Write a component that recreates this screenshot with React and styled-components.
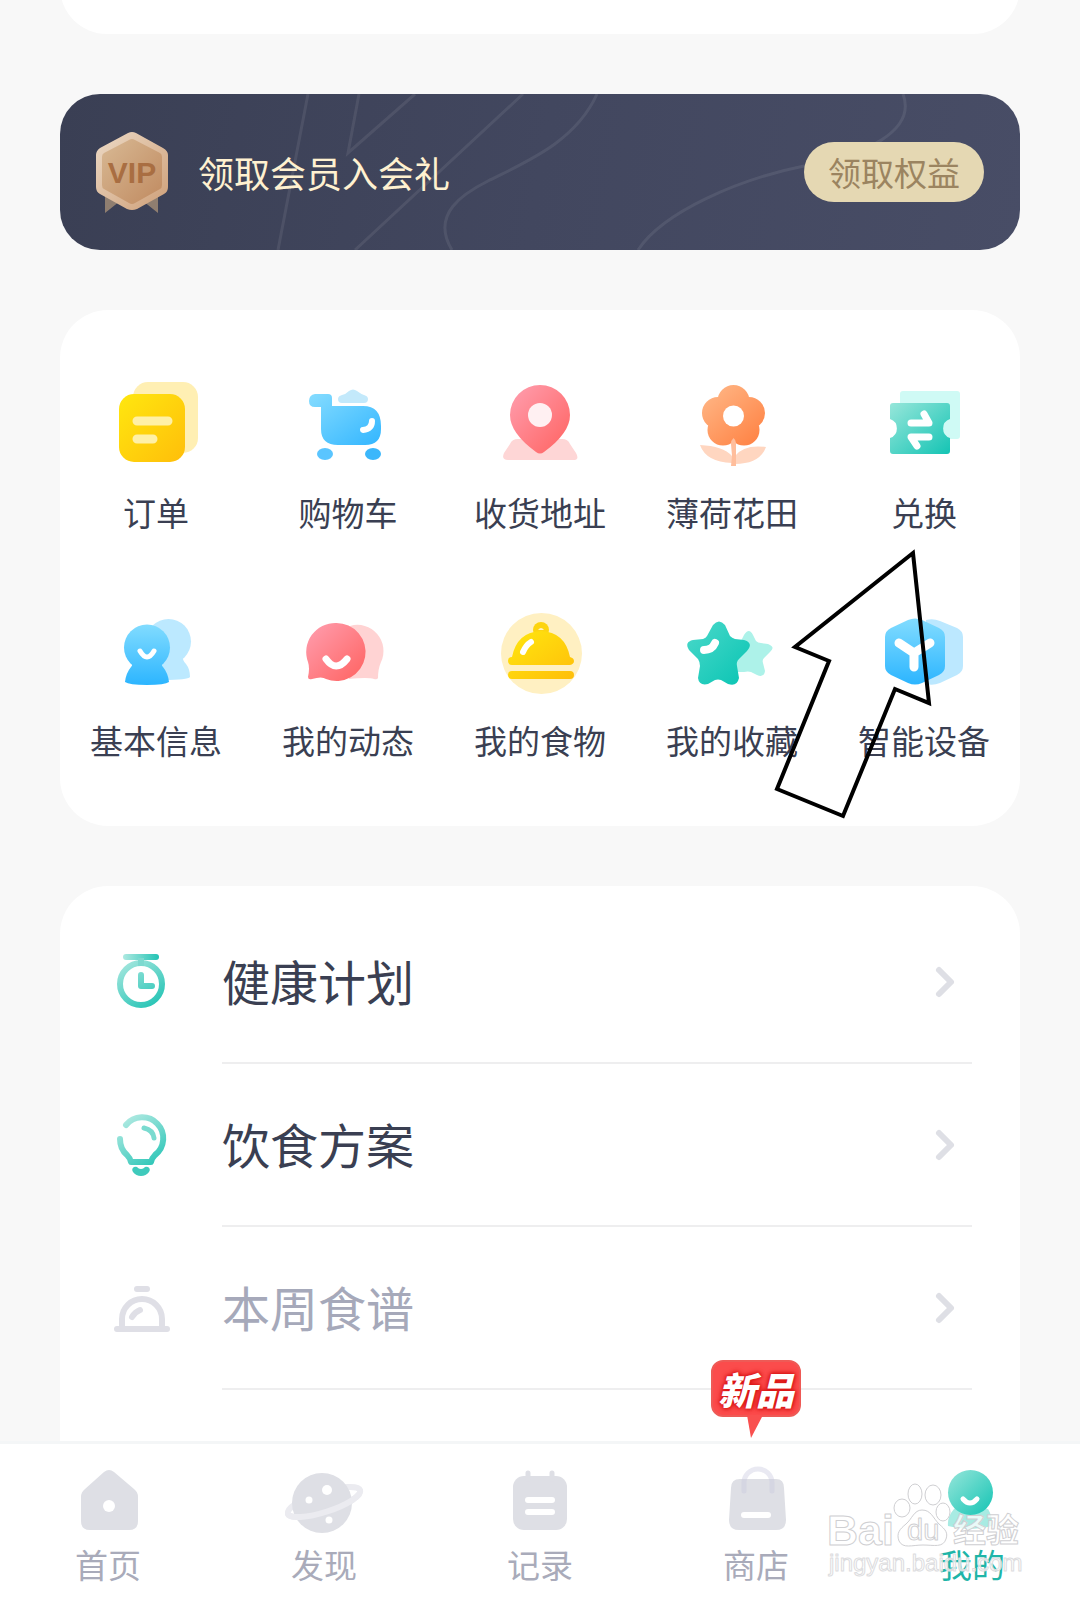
import React from "react";
import styled, { createGlobalStyle } from "styled-components";

const GlobalStyle = createGlobalStyle`
  *, *::before, *::after { box-sizing: border-box; }
  body {
    margin: 0;
    background: #f8f8f8;
    color: #3a3f52;
    font-family: "Noto Sans CJK SC", "Noto Sans", sans-serif;
  }
  a { color: inherit; text-decoration: none; }
  svg { display: block; flex: none; overflow: visible; }
`;

const Page = styled.div`
  min-height: 100vh;
  display: flex;
  flex-direction: column;
  overflow: hidden;
`;

const Main = styled.main`
  flex: 1;
  display: flex;
  flex-direction: column;
  gap: 60px;
  padding: 0 60px;
`;

const Card = styled.section`
  background: #fff;
  border-radius: 48px;
`;

const PreviousCard = styled(Card)`
  height: 94px;
  margin-top: -60px;
`;

const Banner = styled.section`
  position: relative;
  display: flex;
  align-items: center;
  gap: 30px;
  height: 156px;
  padding: 0 36px;
  border-radius: 40px;
  overflow: hidden;
  background: linear-gradient(100deg, #3a3f54, #42475f 50%, #484d66);
`;

const BannerLines = styled.svg`
  position: absolute;
  inset: 0;
  width: 100%;
  height: 100%;
`;

const BannerTitle = styled.h2`
  position: relative;
  flex: 1;
  margin: 0;
  font-size: 36px;
  font-weight: 400;
  line-height: 48px;
  color: #fff1d0;
`;

const ClaimButton = styled.button`
  position: relative;
  width: 180px;
  height: 60px;
  padding: 0;
  border: 0;
  border-radius: 30px;
  background: #e5d8b3;
  color: #9b8460;
  font: inherit;
  font-size: 33px;
  line-height: 48px;
`;

const GridCard = styled(Card)`
  position: relative;
  padding: 68px 0 62px;
`;

const ShortcutGrid = styled.nav`
  display: grid;
  grid-template-columns: repeat(5, 1fr);
  row-gap: 70px;
`;

const Shortcut = styled.a`
  display: flex;
  flex-direction: column;
  align-items: center;
  gap: 14px;
  font-size: 33px;
  line-height: 48px;
  white-space: nowrap;
`;

const Pointer = styled.svg`
  position: absolute;
  top: 235px;
  right: 80px;
  pointer-events: none;
`;

const ListCard = styled(Card)`
  flex: 1;
  padding: 15px 48px 48px 51px;
  border-radius: 48px 48px 0 0;
`;

const ListRow = styled.a`
  display: flex;
  align-items: center;
  gap: 51px;
  color: ${(p) => (p.$muted ? "#a6a9ba" : "#3a3f52")};
`;

const RowBody = styled.span`
  flex: 1;
  display: flex;
  align-items: center;
  justify-content: space-between;
  height: 163px;
  padding-right: 18px;
  border-bottom: 2px solid #eeeeef;
`;

const RowLabel = styled.span`
  padding-bottom: 4px;
  font-size: 48px;
  line-height: 72px;
`;

const TabBar = styled.nav`
  position: relative;
  display: grid;
  grid-template-columns: repeat(5, 1fr);
  padding: 21px 0 12px;
  border-top: 3px solid #f4f6f7;
  background: #fff;
`;

const Tab = styled.a`
  position: relative;
  display: flex;
  flex-direction: column;
  align-items: center;
  gap: 3px;
  font-size: 33px;
  line-height: 48px;
  color: ${(p) => (p.$active ? "#1fb5a8" : "#a9abba")};
`;

const NewBadge = styled.span`
  position: absolute;
  top: -105px;
  left: 50%;
  margin-left: -45px;
  width: 90px;
  height: 57px;
  border: 2px solid #ee5a56;
  border-radius: 12px;
  background: #fb4c4c;
  color: #fff;
  font-size: 38px;
  font-style: italic;
  font-weight: 900;
  line-height: 54px;
  text-align: center;
  white-space: nowrap;
  text-shadow: 0 0 3px #d91414, 0 0 4px #d91414, 0 0 6px #d91414;
`;

const BadgeTail = styled.svg`
  position: absolute;
  top: 53px;
  left: 32px;
`;

const Watermark = styled.svg`
  position: absolute;
  right: 54px;
  bottom: 4px;
  pointer-events: none;
`;

const Gradient = ({ id, from, to, vertical }) => (
  <linearGradient id={id} x1="0" y1="0" x2={vertical ? "0" : "1"} y2="1">
    <stop offset="0" stopColor={from} />
    <stop offset="1" stopColor={to} />
  </linearGradient>
);

const CanvasGradient = ({ id, from, to, box: [x1, y1, x2, y2] }) => (
  <linearGradient id={id} gradientUnits="userSpaceOnUse" x1={x1} y1={y1} x2={x2} y2={y2}>
    <stop offset="0" stopColor={from} />
    <stop offset="1" stopColor={to} />
  </linearGradient>
);

const SharedGradients = () => (
  <svg width="0" height="0" style={{ position: "absolute" }} aria-hidden="true">
    <defs>
      <Gradient id="yellow" from="#ffe70f" to="#ffbe0a" />
      <Gradient id="blue" from="#85dcff" to="#33b6ff" />
      <Gradient id="blueDown" from="#82dcff" to="#2cb5ff" vertical />
      <Gradient id="pink" from="#ff9fb0" to="#ff6260" />
      <Gradient id="teal" from="#97e6da" to="#14c4b4" />
      <Gradient id="star" from="#4cd9ca" to="#08c4b3" />
      <Gradient id="gold" from="#d8b994" to="#c08a60" />
      <Gradient id="rim" from="#ecdac6" to="#ce9f78" />
      <CanvasGradient id="petal" from="#ffb584" to="#ff8446" box={[24, 12, 70, 66]} />
      <CanvasGradient id="person" from="#82dcff" to="#2cb5ff" box={[39, 18, 39, 79]} />
      <CanvasGradient id="tealStroke" from="#aee9e1" to="#22c3b4" box={[12, 4, 46, 54]} />
      <CanvasGradient id="tealBar" from="#aee9e1" to="#22c3b4" box={[12, 4, 48, 4]} />
    </defs>
  </svg>
);

const VipBadge = () => (
  <svg width="72" height="82" viewBox="0 0 72 82" aria-label="VIP">
    <path d="M9 62v20l15-12zM62 62v20L47 70z" fill="#8f7e70" />
    <path d="M32 2q4-2 8 0l27 15q5 3 5 7v32q0 5-4 7L41 78q-5 2-10 0L4 63q-4-2-4-7V24q0-4 4-7z" fill="url(#rim)" />
    <path d="M33 9q3-2 6 0l25 13q2 1 2 4v28q0 3-2 4L39 72q-3 2-6 0L8 58q-2-1-2-4V26q0-3 2-4z" fill="url(#gold)" />
    <text x="36" y="52" textAnchor="middle" fontFamily="Liberation Sans, Arial, sans-serif" fontWeight="700" fontSize="30" fill="#a96e42">VIP</text>
  </svg>
);

const glyphs = {
  orders: (
    <>
      <rect x="25" y="4" width="65" height="71" rx="15" fill="#ffefb3" />
      <rect x="11" y="16" width="66" height="68" rx="15" fill="url(#yellow)" />
      <path d="M29 43h31M29 61h16" stroke="#fff0a6" strokeWidth="9" strokeLinecap="round" />
    </>
  ),
  cart: (
    <>
      <path d="M42 25q-4 0-4-4 0-3 4-4 4-1 7-4 4-3 8 0 4 3 7 4 4 1 4 4 0 4-4 4z" fill="#c3e9fb" />
      <path d="M15 16h13q4 0 4 4v8h31q18 0 18 20v3q0 16-16 16H38q-17 0-17-16V29h-6q-6 0-6-6t6-7z" fill="url(#blue)" />
      <ellipse cx="25" cy="76" rx="8" ry="6" fill="#5ac5ff" />
      <ellipse cx="73" cy="76" rx="8" ry="6" fill="#3bb7fb" />
      <path d="M72 43q0 8-9 9" fill="none" stroke="#fff" strokeWidth="6" strokeLinecap="round" />
    </>
  ),
  address: (
    <>
      <path d="M26 61h44q6 0 8 5l6 9q4 7-3 7H16q-7 0-4-7l6-9q2-5 8-5z" fill="#fed6d6" />
      <path d="M48 7a30 30 0 0 1 30 30q0 18-26 37-4 3-8 0Q18 55 18 37A30 30 0 0 1 48 7z" fill="url(#pink)" />
      <circle cx="48" cy="37" r="12" fill="#fff0f2" />
    </>
  ),
  flower: (
    <>
      <path d="M16 67q23 1 32 11v7q-26-1-32-18zM82 69q-22-3-31 9v8q25 0 31-17z" fill="#ffd6c0" />
      <g fill="url(#petal)">
        <circle cx="49.5" cy="23" r="16" />
        <circle cx="34" cy="35" r="16" />
        <circle cx="65" cy="35" r="16" />
        <circle cx="39" cy="52" r="15.5" />
        <circle cx="60" cy="52" r="15.5" />
        <circle cx="49.5" cy="42" r="14" />
      </g>
      <circle cx="49.5" cy="38" r="10.5" fill="#fff" />
      <path d="M49.5 60q2.500 2 2.500 5v23h-5l1-10-1-12q0-4 2.500-6z" fill="#ffbe9c" />
    </>
  ),
  exchange: (
    <>
      <rect x="24" y="13" width="60" height="48" rx="3" fill="#cffaf5" />
      <path d="M17 25h54q3 0 3 3v13a10 10 0 0 0 0 19v13q0 3-3 3H17q-3 0-3-3V60a10 10 0 0 0 0-19V28q0-3 3-3z" fill="url(#teal)" />
      <path d="M35 45h18l-5-9M53 59H35l6 9" fill="none" stroke="#fff" strokeWidth="7" strokeLinecap="round" strokeLinejoin="round" />
    </>
  ),
  profile: (
    <>
      <g fill="#bce9ff">
        <circle cx="60.5" cy="35.500" r="22.5" />
        <path d="M50 50h25q-1 4 3 8 4 5 4 13-2 3-27 3z" />
      </g>
      <g fill="url(#person)">
        <circle cx="39" cy="41.500" r="23" />
        <path d="M24 55h30q-1 4 1 6 5 6 6 15-4 3-22 3t-22-3q1-9 6-15 2-2 1-6z" />
      </g>
      <path d="M32 45q7 12 14 0" fill="none" stroke="#fff" strokeWidth="5" strokeLinecap="round" />
    </>
  ),
  posts: (
    <>
      <path d="M50 20a26 26 0 0 1 31 36q-3 7-3 16-1 2-4 1-6-2-25 0z" fill="#ffd3d3" />
      <path d="M36 17a29 29 0 1 1-10 56q-4-3-14 0-4 1-4-2 2-9 0-15A29 29 0 0 1 36 17z" fill="url(#pink)" />
      <path d="M26 53q10 14 21 0" fill="none" stroke="#fff" strokeWidth="7" strokeLinecap="round" />
    </>
  ),
  food: (
    <>
      <circle cx="49.5" cy="47.5" r="40.5" fill="#fff0c2" />
      <circle cx="49" cy="24" r="8" fill="#fdd410" />
      <path d="M20 51Q25 26 49 25q24 1 29 26 4 1 4 4t-4 4H20q-4 0-4-4t4-4zM20 65h58q4 0 4 4t-4 4H20q-4 0-4-4t4-4z" fill="url(#yellow)" />
      <path d="M46 24q3-4 6 0z" fill="#fff0c2" />
      <path d="M39 36q-5 3-8 10" fill="none" stroke="#fff" strokeWidth="6" strokeLinecap="round" />
    </>
  ),
  favorites: (
    <>
      <path d="M60 29q5-8 9 0l3 6q2 2 5 2l7 1q8 3 2 8l-6 6q-2 2-1 5l2 8q-1 7-8 4l-6-3q-3-1-7 0H50V36q7 0 8-3z" fill="#adf2e9" />
      <path d="M29 19q6-7 12 0l5 11q2 2 5 3l9 1q10 3 3 11l-8 8q-3 3-2 7l2 12q-2 9-11 6l-7-4q-3-1-6 0l-7 4q-9 2-10-6l2-12q0-4-2-7l-9-9q-5-8 4-10l10-1q3-1 4-3z" fill="url(#star)" />
      <path d="M20 44q8 0 11-7" fill="none" stroke="#fff" strokeWidth="8" strokeLinecap="round" />
    </>
  ),
  device: (
    <>
      <path d="M50 14q7-2 14 1l17 7q6 3 6 9v29q0 6-6 9l-17 8q-7 3-14 1z" fill="#bce8ff" />
      <path d="M32 14q7-3 14 0l17 8q6 3 6 9v29q0 6-6 9l-17 8q-7 3-14 0l-17-8q-6-3-6-9V31q0-6 6-9z" fill="url(#blueDown)" />
      <path d="M23 37l15 10 16-10M38 47v14" fill="none" stroke="#fff" strokeWidth="9" strokeLinecap="round" strokeLinejoin="round" />
    </>
  ),
};

const rowGlyphs = {
  plan: (
    <g fill="none" stroke="url(#tealStroke)" strokeWidth="6" strokeLinecap="round" strokeLinejoin="round">
      <rect x="12" y="1" width="36" height="6" rx="3" fill="url(#tealBar)" stroke="none" />
      <circle cx="30" cy="31" r="21" />
      <path d="M30 5v8" strokeLinecap="butt" stroke="#7dd9cf" />
      <path d="M30 22v11h11" />
    </g>
  ),
  diet: (
    <g fill="none" stroke="url(#tealStroke)" strokeWidth="6" strokeLinecap="round" strokeLinejoin="round">
      <path d="M15 9A21 21 0 1 1 44 39q-3 3-4 7H20q-1-4-4-7-7-6-7-16" />
      <path d="M33 12q9 2 10 10" stroke="#7adbd0" strokeWidth="5" />
      <path d="M23 51q3-1 4 1 3 2 6 0 1-2 4-1 3 2 1 5-3 4-8 4t-8-4q-2-3 1-5z" fill="#3fcabc" stroke="none" />
    </g>
  ),
  menu: (
    <g fill="none" stroke="#dfdfe6" strokeWidth="6" strokeLinecap="round" strokeLinejoin="round">
      <path d="M26 10h10M6 50h50M11 50V40a20 20 0 0 1 40 0v10M29 31q-5 2-8 7" />
    </g>
  ),
};

const tabGlyphs = {
  home: (
    <>
      <path d="M38 7q5-4 10 0l20 17q4 3 4 8v24q0 9-9 9H24q-9 0-9-9V32q0-5 4-8z" fill="#dedfe5" />
      <circle cx="43" cy="41" r="6" fill="#fff" />
    </>
  ),
  discover: (
    <>
      <ellipse cx="42" cy="37" rx="38" ry="10" transform="rotate(-18 42 37)" fill="none" stroke="#ebebf0" strokeWidth="6" />
      <circle cx="40" cy="38" r="30" fill="#dedfe5" />
      <circle cx="45" cy="25" r="5" fill="#fff" />
      <circle cx="27" cy="35" r="3.5" fill="#fff" />
      <circle cx="47" cy="55" r="3.5" fill="#fff" />
      <path d="M4 37a38 10 0 0 0 76 0" transform="rotate(-18 42 37)" fill="none" stroke="#ebebf0" strokeWidth="6" />
    </>
  ),
  record: (
    <>
      <rect x="15" y="11" width="54" height="54" rx="11" fill="#dedfe5" />
      <path d="M30 8v6M54 8v6" stroke="#dedfe5" strokeWidth="5" strokeLinecap="round" />
      <path d="M30 35h24M30 47h24" stroke="#fff" strokeWidth="6" strokeLinecap="round" />
    </>
  ),
  shop: (
    <>
      <path d="M26 14h36q8 0 8 9l2 32q0 10-10 10H25q-10 0-10-10l2-32q0-9 9-9z" fill="#dedfe5" />
      <path d="M30 26V18a14 14 0 0 1 28 0v8" fill="none" stroke="#c8c8df" strokeOpacity=".4" strokeWidth="5" strokeLinecap="round" />
      <path d="M30 50h24" stroke="#fff" strokeWidth="6" strokeLinecap="round" />
    </>
  ),
  mine: (
    <>
      <path d="M24 44h34q5 8 4 17-22 6-44 0-1-9 6-17z" fill="#a8ebe3" />
      <circle cx="40.500" cy="27.500" r="22.5" fill="url(#teal)" />
      <path d="M33 34q7 8 14 0" fill="none" stroke="#fff" strokeWidth="5" strokeLinecap="round" />
    </>
  ),
};

const Chevron = () => (
  <svg width="18" height="30" viewBox="0 0 18 30" aria-hidden="true">
    <path d="M3 3l12 12L3 27" fill="none" stroke="#dedfe5" strokeWidth="6" strokeLinecap="round" strokeLinejoin="round" />
  </svg>
);

const SiteWatermark = () => (
  <Watermark width="204" height="116" viewBox="0 0 204 116" aria-hidden="true">
    <g fill="#fff" fillOpacity=".75" stroke="#cfcfd2" strokeWidth="1" strokeLinejoin="round">
      <ellipse cx="80" cy="28" rx="8" ry="9" />
      <ellipse cx="93" cy="14" rx="7" ry="10" />
      <ellipse cx="111" cy="15" rx="8" ry="10" />
      <ellipse cx="121" cy="32" rx="7" ry="9" />
      <path d="M100 30c9 0 11 8 17 14 7 6 9 9 7 15-3 9-12 6-23 6s-20 4-24-4c-3-8 1-12 7-17s8-14 16-14z" />
      <g fontFamily="Liberation Sans, Arial, sans-serif">
        <text x="5" y="65" fontSize="43" fontWeight="700">Bai</text>
        <text x="85" y="60" fontSize="29">du</text>
        <text x="7" y="91" fontSize="24" stroke="#dcdcde">jingyan.baidu.com</text>
      </g>
      <text x="131" y="62" fontSize="33" fontWeight="700" fontFamily="Noto Sans CJK SC, sans-serif">经验</text>
    </g>
  </Watermark>
);

const shortcuts = [
  ["orders", "订单"],
  ["cart", "购物车"],
  ["address", "收货地址"],
  ["flower", "薄荷花田"],
  ["exchange", "兑换"],
  ["profile", "基本信息"],
  ["posts", "我的动态"],
  ["food", "我的食物"],
  ["favorites", "我的收藏"],
  ["device", "智能设备"],
];

const rows = [
  { icon: "plan", label: "健康计划" },
  { icon: "diet", label: "饮食方案" },
  { icon: "menu", label: "本周食谱", muted: true },
];

const tabs = [
  { icon: "home", label: "首页" },
  { icon: "discover", label: "发现" },
  { icon: "record", label: "记录" },
  { icon: "shop", label: "商店", badge: "新品" },
  { icon: "mine", label: "我的", active: true },
];

export default function App() {
  return (
    <Page>
      <GlobalStyle />
      <SharedGradients />
      <Main>
        <PreviousCard />
        <Banner>
          <BannerLines viewBox="0 0 960 156" preserveAspectRatio="none" aria-hidden="true">
            <g fill="none" stroke="#fff" strokeOpacity=".08" strokeWidth="3">
              <path d="M248 0L218 156M299 0l-11 59L355 0M463 0L295 156" />
              <path d="M392 156c-22-36 12-57 36-69 40-20 88-40 109-87" />
              <path d="M578 156c25-38 101-71 166-84 60-10 113-35 99-72" />
            </g>
          </BannerLines>
          <VipBadge />
          <BannerTitle>领取会员入会礼</BannerTitle>
          <ClaimButton type="button">领取权益</ClaimButton>
        </Banner>
        <GridCard>
          <ShortcutGrid>
            {shortcuts.map(([icon, label]) => (
              <Shortcut href="#" key={icon}>
                <svg width="96" height="96" viewBox="0 0 96 96" aria-hidden="true">{glyphs[icon]}</svg>
                {label}
              </Shortcut>
            ))}
          </ShortcutGrid>
          <Pointer width="170" height="280" viewBox="0 0 170 280" aria-hidden="true">
            <path d="M143 8L25 102l34 14L7 244l66 27 52-127 34 14z" fill="none" stroke="#000" strokeWidth="4" />
          </Pointer>
        </GridCard>
        <ListCard>
          {rows.map(({ icon, label, muted }) => (
            <ListRow href="#" key={icon} $muted={muted}>
              <svg width="60" height="60" viewBox="0 0 60 60" aria-hidden="true">{rowGlyphs[icon]}</svg>
              <RowBody>
                <RowLabel>{label}</RowLabel>
                <Chevron />
              </RowBody>
            </ListRow>
          ))}
        </ListCard>
      </Main>
      <TabBar>
        {tabs.map(({ icon, label, badge, active }) => (
          <Tab href="#" key={icon} $active={active}>
            <svg width="84" height="72" viewBox="0 0 84 72" aria-hidden="true">{tabGlyphs[icon]}</svg>
            {label}
            {badge && (
              <NewBadge>
                {badge}
                <BadgeTail width="20" height="24" viewBox="0 0 20 24" aria-hidden="true">
                  <path d="M2 0h16L6 23z" fill="#f9504f" />
                </BadgeTail>
              </NewBadge>
            )}
          </Tab>
        ))}
        <SiteWatermark />
      </TabBar>
    </Page>
  );
}
